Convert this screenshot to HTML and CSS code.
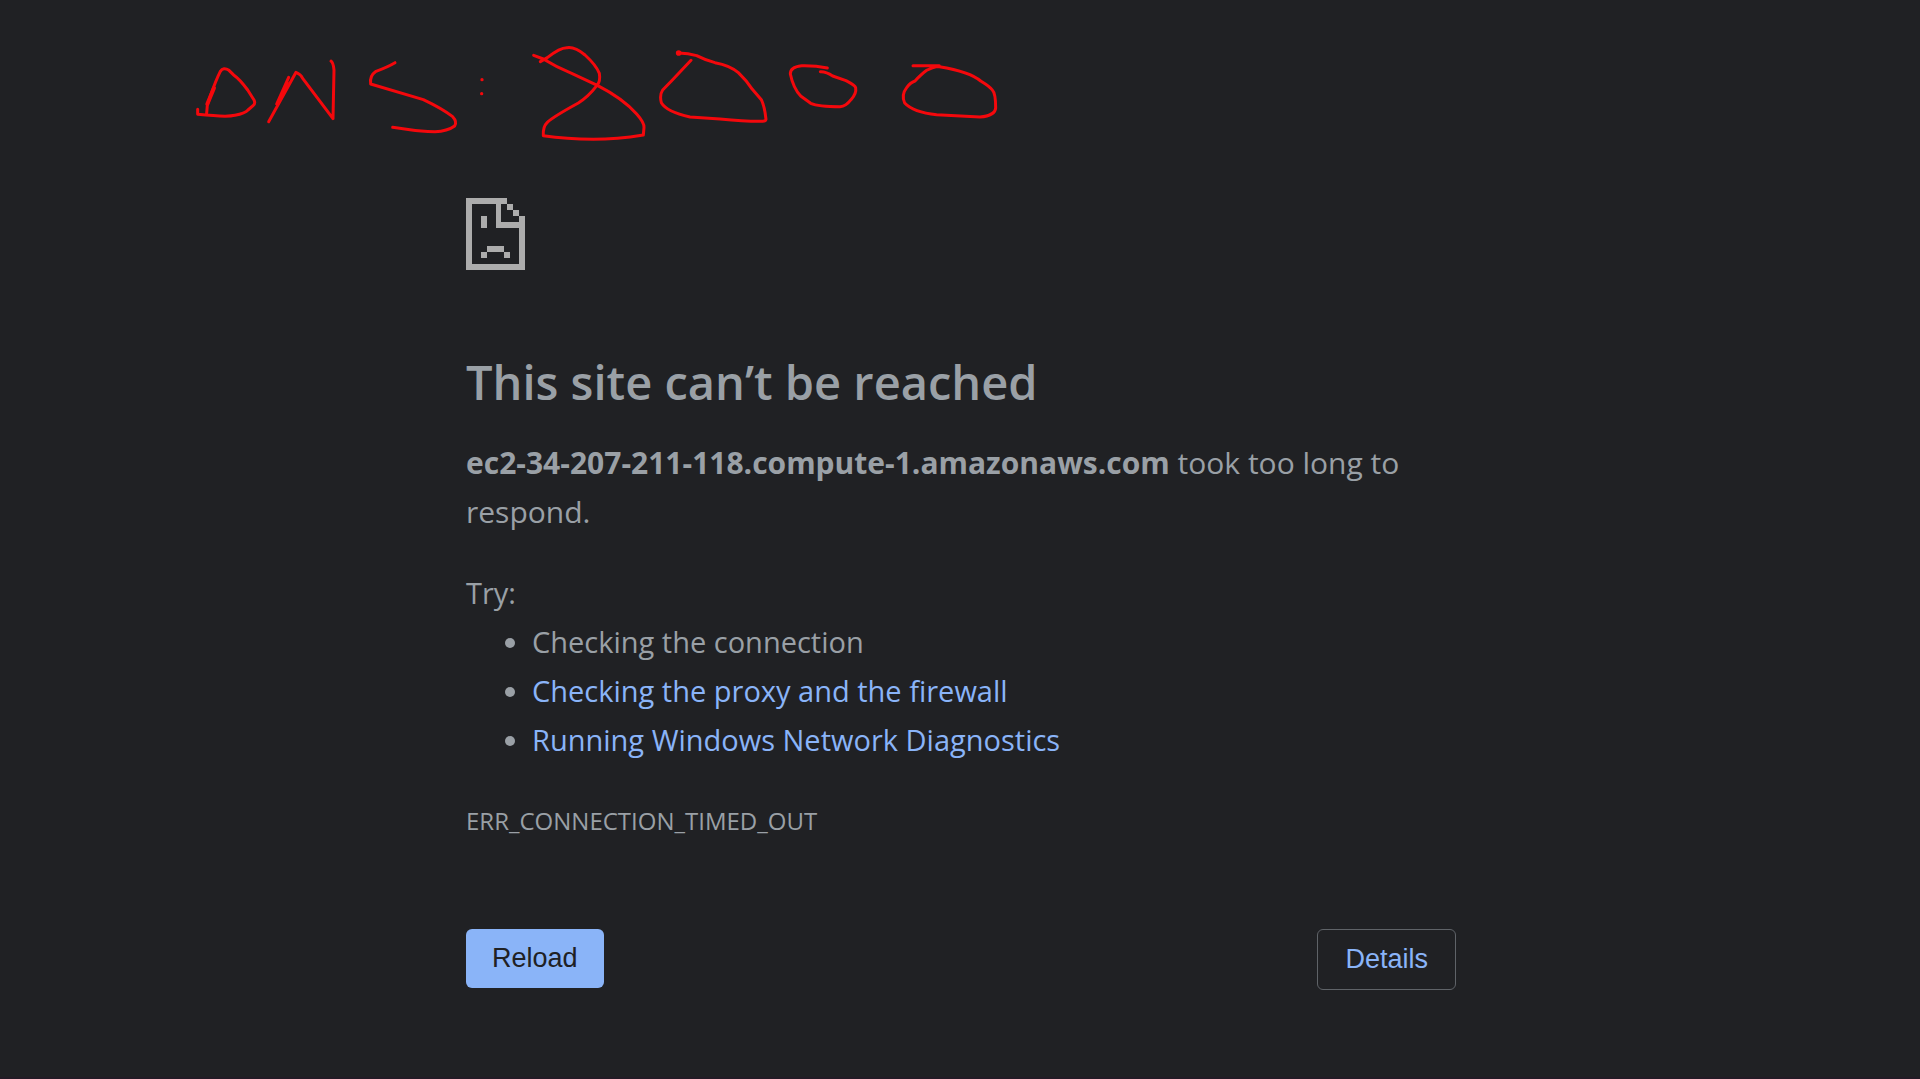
FILE: index.html
```html
<!DOCTYPE html>
<html lang="en">
<head>
<meta charset="utf-8">
<title>ec2-34-207-211-118.compute-1.amazonaws.com</title>
<link rel="stylesheet" href="styles.css">
</head>
<body>
<svg class="ink" viewBox="0 0 3300 450" role="img" aria-label="DNS:8000">
  <g transform="translate(540 90)">
    <path d="M53 238 L53 253 Q140 262 165 256 Q195 250 204 240 L220 226 Q227 220 222 210 L203 180 Q180 148 160 134 L147 121 Q130 110 121 124 Q108 150 92 195 L82 225 L80 250"/>
    <path class="heavy" d="M102 174 L82 222"/>
    <path d="M266 275 L348 127 Q362 132 368 145 L459 266 L462 120 Q460 98 453 93"/>
    <path d="M326 142 L290 222 M322 158 L298 208"/>
    <path d="M645 98 Q625 110 588 124 Q568 138 572 162 L730 209 Q785 235 818 260 Q832 275 824 288 Q802 304 765 305 Q720 304 690 299 L638 292"/>
  </g>
  <g transform="translate(1380 90)">
    <path class="dot" d="M66 149v.1M65 191v.1"/>
    <path d="M221 76 L250 87 Q290 112 335 130 L412 166 Q490 206 530 252 Q553 278 552 292 L550 315 Q470 328 400 328 Q320 327 250 317 Q248 290 262 277 Q280 260 355 219 Q385 200 411 166 Q422 155 418 130 Q408 105 375 75 Q345 50 322 53 Q300 52 262 83 L241 95"/>
    <path d="M656 69 Q685 70 710 77 Q735 90 765 98 Q810 106 835 128 Q860 152 877 178 L904 209 Q914 230 918 268 Q917 274 908 274 Q860 275 780 267 L690 261 Q620 245 604 218 Q598 195 608 180 L635 152 L693 91"/>
    <path class="blot" d="M656 69v.1"/>
  </g>
  <g transform="translate(2220 90)">
    <path d="M262 114 Q225 106 185 107 Q150 111 151 132 Q160 175 182 198 L212 220 Q235 230 300 230 Q318 229 333 209 Q350 190 347 173 Q345 166 318 152 L278 138 Q258 124 241 125"/>
    <path d="M519 107 L598 107 Q575 112 560 121 Q545 132 525 153 Q510 158 500 173 Q483 195 494 219 Q520 247 590 254 L720 261 Q765 257 767 234 Q767 190 757 180 Q750 170 722 153 Q690 125 598 110 L580 109"/>
  </g>
</svg>
<main class="page">
  <svg class="sad-page" viewBox="0 0 20 24" preserveAspectRatio="none" aria-hidden="true">
    <path d="M0 0h14v2h2v2h2v2h2v18H0zM2 2v20h16V10h-8V2zM12 2v6h6V6h-2V4h-2V2z" fill-rule="evenodd"/>
    <path d="M5 6h2v4H5zM7 16h6v2H7zM5 18h2v2H5zM13 18h2v2h-2z"/>
  </svg>
  <h1 class="title">This site can’t be reached</h1>
  <p class="text summary"><strong>ec2-34-207-211-118.compute-1.amazonaws.com</strong> took too long to respond.</p>
  <p class="text try">Try:</p>
  <ul class="text tips">
    <li>Checking the connection</li>
    <li><a href="#proxy">Checking the proxy and the firewall</a></li>
    <li><a href="#diagnostics">Running Windows Network Diagnostics</a></li>
  </ul>
  <p class="code">ERR_CONNECTION_TIMED_OUT</p>
  <div class="actions">
    <button class="button primary" type="button">Reload</button>
    <button class="button secondary" type="button">Details</button>
  </div>
</main>
</body>
</html>
```
FILE: styles.css
```css
* { box-sizing: border-box; }
body {
  margin: 0;
  min-height: 100vh;
  border-bottom: 2px solid #231b26;
  background: #202124;
  color: #9aa0a6;
  font-family: "Segoe UI", "Open Sans", "Noto Sans", sans-serif;
}
.ink {
  position: absolute;
  top: 0;
  left: 0;
  width: 1100px;
  height: 150px;
  fill: none;
  stroke: #f4080c;
  stroke-width: 9;
  stroke-linecap: round;
  stroke-linejoin: round;
  pointer-events: none;
}
.ink .dot { stroke-width: 10; }
.ink .heavy { stroke-width: 12; }
.ink .blot { stroke-width: 17; }
.page {
  max-width: 992px;
  margin: 0 auto;
  padding: 198px 0 60px 2px;
}
.sad-page {
  display: block;
  width: 59px;
  height: 72px;
  fill: #acacac;
  shape-rendering: crispEdges;
}
.title {
  margin: 80px 0 24px;
  font-size: 47px;
  font-weight: 600;
  line-height: 64px;
}
.text {
  margin: 0;
  font-size: 29px;
  line-height: 49px;
}
.summary { font-size: 30px; }
.try { margin-top: 32px; }
.tips { padding-left: 66px; }
a { color: #8ab4f8; text-decoration: none; }
.code {
  margin: 32px 0 0;
  font-size: 24px;
  line-height: 50px;
}
.actions {
  display: flex;
  flex-wrap: wrap;
  justify-content: space-between;
  align-items: flex-start;
  margin-top: 83px;
}
.button {
  padding: 14px 26px;
  border: 0;
  border-radius: 6px;
  font: 27px/31px "Liberation Sans", Arial, sans-serif;
  cursor: pointer;
}
.primary { background: #8ab4f8; color: #202124; }
.secondary {
  padding: 14px 27px;
  border: 1px solid #5f6368;
  background: transparent;
  color: #8ab4f8;
}
```
